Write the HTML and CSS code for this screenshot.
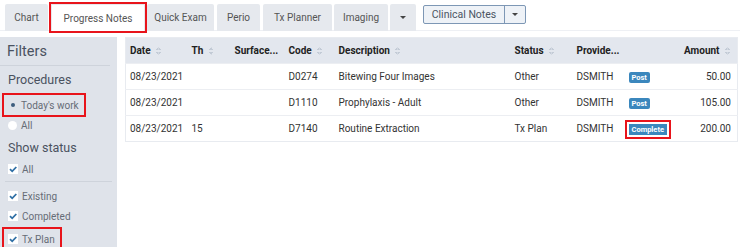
FILE: index.html
```html
<!DOCTYPE html>
<html>
<head>
<meta charset="utf-8">
<link rel="stylesheet" href="styles.css">
</head>
<body>
<div class="tabbar">
  <div class="tab t-chart">Chart</div>
  <div class="tab t-pn active hl">Progress Notes</div>
  <div class="tab t-qe">Quick Exam</div>
  <div class="tab t-perio">Perio</div>
  <div class="tab t-txp">Tx Planner</div>
  <div class="tab t-img">Imaging</div>
  <div class="tab t-caret"><span class="caret"></span></div>
  <div class="split">
    <span class="split-main">Clinical Notes</span>
    <span class="split-caret"><span class="caret"></span></span>
  </div>
</div>
<div class="main">
  <aside class="side">
    <div class="side-title">Filters</div>
    <div class="side-head">Procedures</div>
    <div class="opt hl"><span class="radio on"></span>Today's work</div>
    <div class="opt"><span class="radio"></span>All</div>
    <div class="side-head status">Show status</div>
    <div class="opt chk sep"><span class="check"><svg viewBox="0 0 10 10" width="10" height="10"><path d="M2 5.2 L4.2 7.3 L8.3 3" fill="none" stroke="#2f6fa5" stroke-width="1.8"/></svg></span>All</div>
    <div class="opt chk"><span class="check"><svg viewBox="0 0 10 10" width="10" height="10"><path d="M2 5.2 L4.2 7.3 L8.3 3" fill="none" stroke="#2f6fa5" stroke-width="1.8"/></svg></span>Existing</div>
    <div class="opt chk"><span class="check"><svg viewBox="0 0 10 10" width="10" height="10"><path d="M2 5.2 L4.2 7.3 L8.3 3" fill="none" stroke="#2f6fa5" stroke-width="1.8"/></svg></span>Completed</div>
    <div class="opt chk hl last"><span class="check"><svg viewBox="0 0 10 10" width="10" height="10"><path d="M2 5.2 L4.2 7.3 L8.3 3" fill="none" stroke="#2f6fa5" stroke-width="1.8"/></svg></span>Tx Plan</div>
  </aside>
  <table class="grid">
    <thead>
      <tr>
        <th class="c-date">Date <span class="sort"></span></th>
        <th class="c-th">Th <span class="sort"></span></th>
        <th class="c-surf">Surface...</th>
        <th class="c-code">Code <span class="sort"></span></th>
        <th class="c-desc">Description <span class="sort"></span></th>
        <th class="c-stat">Status <span class="sort"></span></th>
        <th class="c-prov">Provide...</th>
        <th class="c-badge"></th>
        <th class="c-amt">Amount <span class="sort"></span></th>
      </tr>
    </thead>
    <tbody>
      <tr>
        <td>08/23/2021</td><td></td><td></td><td>D0274</td><td>Bitewing Four Images</td><td>Other</td><td>DSMITH</td><td><span class="badge">Post</span></td><td class="amt">50.00</td>
      </tr>
      <tr>
        <td>08/23/2021</td><td></td><td></td><td>D1110</td><td>Prophylaxis - Adult</td><td>Other</td><td>DSMITH</td><td><span class="badge">Post</span></td><td class="amt">105.00</td>
      </tr>
      <tr>
        <td>08/23/2021</td><td>15</td><td></td><td>D7140</td><td>Routine Extraction</td><td>Tx Plan</td><td>DSMITH</td><td><span class="badge hlb">Complete</span></td><td class="amt">200.00</td>
      </tr>
    </tbody>
  </table>
</div>
</body>
</html>
```

FILE: styles.css
```css
* { box-sizing: border-box; }
html, body { margin: 0; padding: 0; background: #fff; }
body {
  font-family: Roboto, "Liberation Sans", sans-serif;
  font-size: 10px;
  color: #333;
  width: 740px;
  height: 247px;
  overflow: hidden;
}
.tabbar {
  display: flex;
  align-items: flex-start;
  height: 31px;
  padding: 4px 0 0 5px;
  border-bottom: 1px solid #eef0f4;
  gap: 2px;
}
.tab {
  height: 27px;
  background: #e6e9ee;
  border-radius: 2px 2px 0 0;
  color: #555;
  display: flex;
  align-items: center;
  justify-content: center;
  font-size: 10px;
}
.t-chart { width: 43px; }
.t-pn { width: 94px; margin-left: 1px; }
.t-qe { width: 67px; }
.t-perio { width: 43px; margin-left: 1px; }
.t-txp { width: 69px; margin-left: 1px; }
.t-img { width: 54px; }
.t-caret { width: 26px; }
.tab.active {
  background: #fff;
  border: 1px solid #e6e9ee;
  border-bottom: none;
}
.hl { outline: 2px solid #e8141b; outline-offset: 1px; border-radius: 0; }
.tab.hl { outline-offset: 0; border-radius: 0; }
.caret {
  display: inline-block;
  width: 0; height: 0;
  border-left: 3px solid transparent;
  border-right: 3px solid transparent;
  border-top: 3px solid #444;
}
.split {
  margin-left: 5px;
  margin-top: 1px;
  display: flex;
  height: 19px;
  border: 1px solid #7d97b5;
  border-radius: 2px;
  background: #eef2f7;
}
.split-main {
  width: 80px;
  display: flex;
  align-items: center;
  justify-content: center;
  color: #4b5563;
  font-size: 10.5px;
}
.split-caret {
  width: 21px;
  border-left: 1px solid #7d97b5;
  display: flex;
  align-items: center;
  justify-content: center;
}
.main {
  display: flex;
  margin-top: 6px;
  gap: 8px;
}
.side {
  width: 117px;
  height: 210px;
  background: #dfe3ea;
  padding: 6px 0 0 0;
  color: #555b66;
}
.side-title {
  font-size: 14.5px;
  padding: 0 0 5px 7px;
  margin-right: 7px;
  border-bottom: 1px solid #ced3db;
  color: #4a5260;
  height: 23px;
  line-height: 18px;
}
.side-head {
  font-size: 12.5px;
  padding: 5px 0 0 8px;
  height: 28px;
  line-height: 18px;
  color: #4a5260;
}
.side-head.status { padding-top: 3px; height: 22px; }
.opt {
  display: flex;
  align-items: center;
  height: 18px;
  margin: 2px 0 2px 6px;
  padding-left: 2px;
  font-size: 10px;
  color: #666c76;
  width: max-content;
  padding-right: 4px;
}
.opt.hl { margin-left: 5px; padding-left: 3px; }
.radio {
  width: 9px; height: 9px;
  border-radius: 50%;
  background: #fff;
  margin-right: 4px;
  display: inline-flex;
  align-items: center;
  justify-content: center;
}
.radio.on { background: transparent; }
.radio.on::after {
  content: "";
  width: 4px; height: 4px; border-radius: 50%;
  background: #3d5d7e;
}
.opt.chk { margin-top: 2px; margin-bottom: 2px; }
.opt.chk.last { margin-top: 5px; }
.check {
  width: 10px; height: 10px;
  background: #fff;
  margin-right: 4px;
  display: flex;
}
.opt.sep {
  position: relative;
  margin-bottom: 9px;
}
.opt.sep::after {
  content: "";
  position: absolute;
  left: -1px; top: 21px;
  width: 107px;
  border-bottom: 1px solid #ced3db;
}
.grid {
  width: 613px;
  border-collapse: collapse;
  height: 103px;
  border: 1px solid #e8ebf0;
}
.grid th {
  background: #e3e7ee;
  text-align: left;
  font-weight: 700;
  height: 26px;
  padding: 0 0 0 4px;
  color: #222;
  white-space: nowrap;
}
.grid td {
  height: 26px;
  padding: 0 0 0 4px;
  border-top: 1px solid #eceef2;
  white-space: nowrap;
  color: #333;
}
.c-date { width: 62px; }
.c-th { width: 43px; }
.c-surf { width: 54px; }
.c-code { width: 50px; }
.c-desc { width: 176px; }
.c-stat { width: 62px; }
.c-prov { width: 52px; }
.c-badge { width: 44px; }
.grid th.c-amt { text-align: right; padding-right: 7px; }
.grid td.amt { text-align: right; padding-right: 6px; }
.sort {
  display: inline-block;
  width: 5px; height: 8px;
  vertical-align: middle;
  margin-left: 3px;
  background:
    linear-gradient(to bottom right, transparent 50%, #c3cbd6 50%) 0 0/2.5px 3px no-repeat,
    linear-gradient(to bottom left, transparent 50%, #c3cbd6 50%) 2.5px 0/2.5px 3px no-repeat,
    linear-gradient(to top right, transparent 50%, #c3cbd6 50%) 0 5px/2.5px 3px no-repeat,
    linear-gradient(to top left, transparent 50%, #c3cbd6 50%) 2.5px 5px/2.5px 3px no-repeat;
}
.badge {
  display: inline-block;
  background: #3b87bd;
  color: #fff;
  font-size: 7.5px;
  font-weight: 700;
  padding: 1px 3px;
  border-radius: 2px;
  line-height: 9px;
}
.badge.hlb { outline: 2px solid #e8141b; outline-offset: 2px; border-radius: 0; }
```
